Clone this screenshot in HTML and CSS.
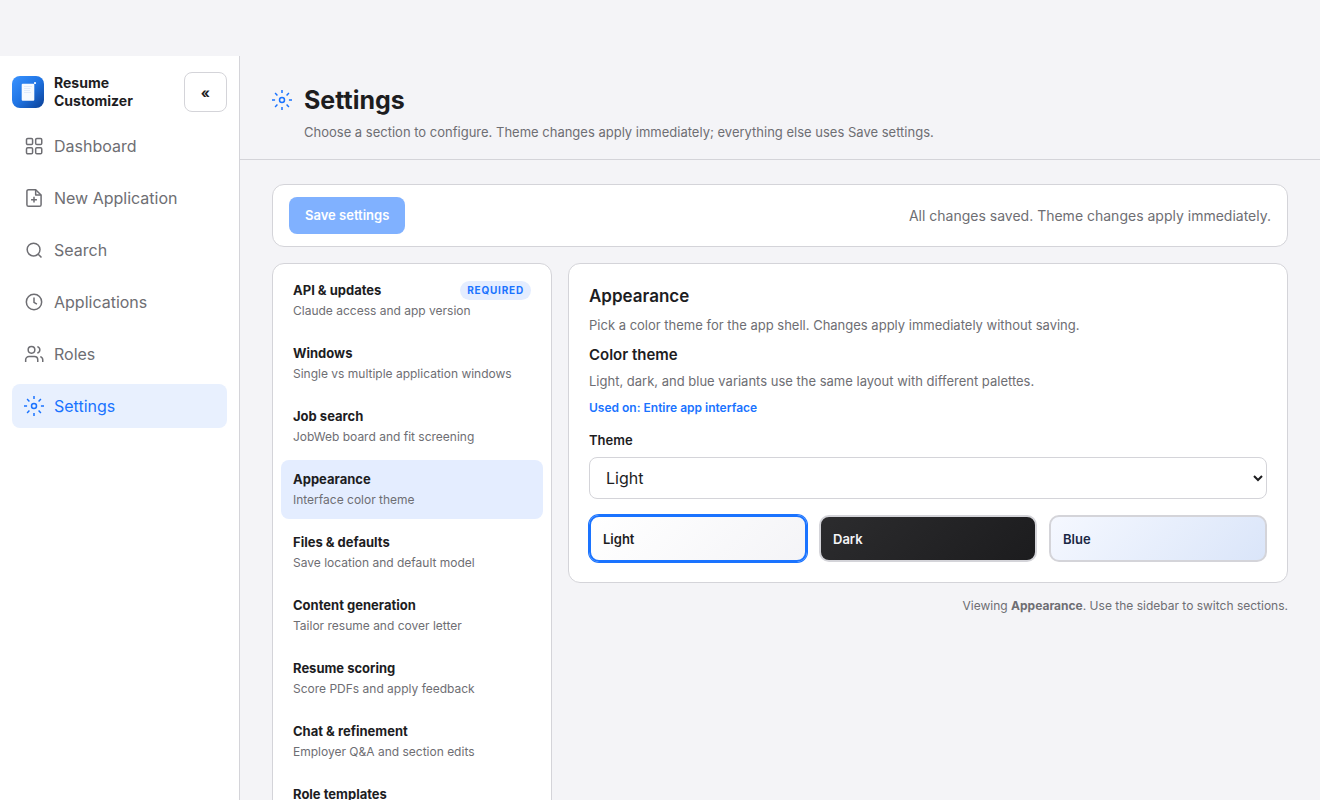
FILE: index.html
```html
<!DOCTYPE html>
<html lang="en">
<head>
    <meta charset="UTF-8">
    <meta name="viewport" content="width=device-width, initial-scale=1">
    <title>Resume Customizer</title>
    <link rel="stylesheet" href="styles.css">
</head>
<body>

<!-- Shared icon shapes -->
<svg class="icon-defs" aria-hidden="true">
    <symbol id="icon-settings" viewBox="0 0 24 24">
        <circle cx="12" cy="12" r="3"/>
        <path d="M12 0v3.700M12 20.300V24M3.700 3.700l2.800 2.800M17.500 17.500l2.800 2.800M0 12h3.700M20.300 12H24M3.700 20.300l2.800-2.800M17.500 6.500l2.800-2.800"/>
    </symbol>
</svg>

<div class="app">
    <aside class="sidebar">
        <div class="sidebar-header">
            <svg class="logo" viewBox="0 0 32 32" aria-hidden="true">
                <defs>
                    <linearGradient id="logo-bg" x1="0" y1="0" x2="1" y2="1">
                        <stop offset="0" stop-color="#3a93ff"/>
                        <stop offset="0.5" stop-color="#1f74e4"/>
                        <stop offset="1" stop-color="#0b3f94"/>
                    </linearGradient>
                </defs>
                <rect width="32" height="32" rx="8" fill="url(#logo-bg)"/>
                <rect x="9.700" y="7.700" width="12.600" height="17" rx="1" fill="#f6faff"/>
                <path d="M12 10.500h8M12 12.500h6.500M12 14.500h6M12 16.500h7" stroke="#e0ebfb" stroke-width="1"/>
                <rect x="22" y="6" width="2" height="2" rx="0.500" fill="#e4f0ff"/>
            </svg>
            <span class="brand">Resume Customizer</span>
            <button class="collapse-btn" type="button" aria-label="Collapse sidebar">«</button>
        </div>

        <nav class="nav">
            <a class="nav-link" href="#dashboard">
                <svg class="icon" viewBox="0 0 24 24"><rect x="3" y="3" width="7.300" height="7.300" rx="1.500"/><rect x="14" y="3" width="7.300" height="7.300" rx="1.500"/><rect x="3" y="14" width="7.300" height="7.300" rx="1.500"/><rect x="14" y="14" width="7.300" height="7.300" rx="1.500"/></svg>
                Dashboard
            </a>
            <a class="nav-link" href="#new">
                <svg class="icon" viewBox="0 0 24 24"><path d="M14 2H5.500a2 2 0 0 0-2 2v16a2 2 0 0 0 2 2h13a2 2 0 0 0 2-2V8.500z"/><path d="M14 2v6.500h6.500M12 10.500v7M8.500 14h7"/></svg>
                New Application
            </a>
            <a class="nav-link" href="#search">
                <svg class="icon" viewBox="0 0 24 24"><circle cx="11.500" cy="11.500" r="7.700"/><path d="M21 21l-4-4"/></svg>
                Search
            </a>
            <a class="nav-link" href="#applications">
                <svg class="icon" viewBox="0 0 24 24"><circle cx="12" cy="12" r="9.200"/><path d="M12 6.500v6l3.500 2"/></svg>
                Applications
            </a>
            <a class="nav-link" href="#roles">
                <svg class="icon" viewBox="0 0 24 24"><path d="M16.500 21.500v-2.500a4 4 0 0 0-4-4H6a4 4 0 0 0-4 4v2.500"/><circle cx="9" cy="7" r="4"/><path d="M22.500 21.500v-2.500a4 4 0 0 0-3-3.870M16 3.130a4 4 0 0 1 0 7.750"/></svg>
                Roles
            </a>
            <a class="nav-link active" href="#settings" aria-current="page">
                <svg class="icon"><use href="#icon-settings"/></svg>
                Settings
            </a>
        </nav>
    </aside>

    <main class="main">
        <header class="page-header">
            <h1><svg class="icon"><use href="#icon-settings"/></svg>Settings</h1>
            <p>Choose a section to configure. Theme changes apply immediately; everything else uses Save settings.</p>
        </header>

        <div class="content">
            <div class="save-bar">
                <button class="save-btn" type="button" disabled>Save settings</button>
                <span class="save-status">All changes saved. Theme changes apply immediately.</span>
            </div>

            <div class="settings-layout">
                <nav class="section-nav card">
                    <button class="section-btn" type="button">
                        <span class="section-title">API &amp; updates <span class="badge">Required</span></span>
                        <span class="section-desc">Claude access and app version</span>
                    </button>
                    <button class="section-btn" type="button">
                        <span class="section-title">Windows</span>
                        <span class="section-desc">Single vs multiple application windows</span>
                    </button>
                    <button class="section-btn" type="button">
                        <span class="section-title">Job search</span>
                        <span class="section-desc">JobWeb board and fit screening</span>
                    </button>
                    <button class="section-btn active" type="button">
                        <span class="section-title">Appearance</span>
                        <span class="section-desc">Interface color theme</span>
                    </button>
                    <button class="section-btn" type="button">
                        <span class="section-title">Files &amp; defaults</span>
                        <span class="section-desc">Save location and default model</span>
                    </button>
                    <button class="section-btn" type="button">
                        <span class="section-title">Content generation</span>
                        <span class="section-desc">Tailor resume and cover letter</span>
                    </button>
                    <button class="section-btn" type="button">
                        <span class="section-title">Resume scoring</span>
                        <span class="section-desc">Score PDFs and apply feedback</span>
                    </button>
                    <button class="section-btn" type="button">
                        <span class="section-title">Chat &amp; refinement</span>
                        <span class="section-desc">Employer Q&amp;A and section edits</span>
                    </button>
                    <button class="section-btn" type="button">
                        <span class="section-title">Role templates</span>
                    </button>
                </nav>

                <div class="section-main">
                    <section class="panel card">
                        <h2>Appearance</h2>
                        <p class="hint">Pick a color theme for the app shell. Changes apply immediately without saving.</p>
                        <h3>Color theme</h3>
                        <p class="hint">Light, dark, and blue variants use the same layout with different palettes.</p>
                        <p class="used-on">Used on: Entire app interface</p>

                        <label for="theme">Theme</label>
                        <select id="theme">
                            <option>Light</option>
                            <option>Dark</option>
                            <option>Blue</option>
                        </select>

                        <div class="swatches">
                            <button class="swatch swatch-light active" type="button">Light</button>
                            <button class="swatch swatch-dark" type="button">Dark</button>
                            <button class="swatch swatch-blue" type="button">Blue</button>
                        </div>
                    </section>
                    <p class="viewing">Viewing <strong>Appearance</strong>. Use the sidebar to switch sections.</p>
                </div>
            </div>
        </div>
    </main>
</div>

</body>
</html>
```
FILE: styles.css
```css
:root {
    --accent: #1a73ff;
    --accent-soft: #e4edff;
    --bg: #f4f4f7;
    --border: #d4d4d9;
    --text: #1d1d1f;
    --muted: #6e6e73;
}

* {
    box-sizing: border-box;
}

body {
    margin: 0;
    height: 100vh;
    padding-top: 56px;
    overflow: hidden;
    font-family: Inter, sans-serif;
    font-size: 16px;
    line-height: 24px;
    color: var(--text);
    background: var(--bg);
}

h1, h2, h3, p {
    margin: 0;
}

button, select {
    font-family: inherit;
    color: inherit;
    cursor: pointer;
}

.icon-defs {
    display: none;
}

.icon {
    width: 20px;
    height: 20px;
    flex-shrink: 0;
    fill: none;
    stroke: currentColor;
    stroke-width: 1.8;
    stroke-linejoin: round;
}

.app {
    display: flex;
    height: 100%;
}

/* Sidebar */
.sidebar {
    width: 240px;
    flex-shrink: 0;
    padding: 16px 12px;
    background: #fff;
    border-right: 1px solid var(--border);
}

.sidebar-header {
    display: flex;
    align-items: center;
    gap: 10px;
    margin-bottom: 12px;
}

.logo {
    width: 32px;
    height: 32px;
    flex-shrink: 0;
}

.brand {
    flex: 1;
    font-size: 14px;
    line-height: 18px;
    font-weight: 700;
}

.collapse-btn {
    height: 40px;
    padding: 0 16px;
    font-size: 14px;
    font-weight: 700;
    background: #fff;
    border: 1px solid var(--border);
    border-radius: 8px;
}

.nav {
    display: flex;
    flex-direction: column;
    gap: 8px;
}

.nav-link {
    display: flex;
    align-items: center;
    gap: 10px;
    padding: 10px 12px;
    color: var(--muted);
    text-decoration: none;
    border-radius: 8px;
}

.nav-link.active {
    color: var(--accent);
    background: #e8f0fe;
}

/* Page header */
.main {
    flex: 1;
    min-width: 0;
}

.page-header {
    padding: 24px 32px 17px;
    border-bottom: 1px solid var(--border);
}

.page-header h1 {
    display: flex;
    align-items: center;
    gap: 12px;
    font-size: 25px;
    line-height: 40px;
    font-weight: 700;
}

.page-header h1 .icon {
    color: var(--accent);
}

.page-header p {
    margin-top: 3px;
    padding-left: 32px;
    font-size: 13px;
    line-height: 19px;
    color: var(--muted);
}

.content {
    padding: 24px 32px;
}

.card,
.save-bar {
    background: #fff;
    border: 1px solid var(--border);
    border-radius: 12px;
}

.save-bar {
    display: flex;
    align-items: center;
    justify-content: space-between;
    margin-bottom: 16px;
    padding: 12px 16px;
}

.save-btn {
    padding: 9px 16px;
    font-size: 13px;
    line-height: 19px;
    font-weight: 600;
    color: #fff;
    background: var(--accent);
    border: none;
    border-radius: 8px;
}

.save-btn:disabled {
    opacity: 0.55;
    cursor: not-allowed;
}

.save-status {
    font-size: 14px;
    color: var(--muted);
}

/* Settings sections */
.settings-layout {
    display: grid;
    grid-template-columns: 280px 1fr;
    gap: 16px;
    align-items: start;
}

.section-nav {
    display: flex;
    flex-direction: column;
    gap: 4px;
    padding: 7px 8px;
}

.section-btn {
    display: flex;
    flex-direction: column;
    gap: 2px;
    padding: 10px 12px;
    text-align: left;
    background: none;
    border: none;
    border-radius: 8px;
}

.section-btn.active {
    background: var(--accent-soft);
}

.section-title {
    display: flex;
    align-items: center;
    justify-content: space-between;
    width: 100%;
    font-size: 13px;
    line-height: 19px;
    font-weight: 700;
}

.section-desc {
    font-size: 12px;
    line-height: 18px;
    color: var(--muted);
}

.badge {
    padding: 2px 7px;
    font-size: 10px;
    line-height: 15px;
    font-weight: 700;
    letter-spacing: 0.08em;
    text-transform: uppercase;
    color: var(--accent);
    background: var(--accent-soft);
    border-radius: 10px;
}

.panel {
    padding: 20px;
}

.panel h2 {
    font-size: 17px;
    line-height: 24px;
    font-weight: 600;
}

.panel h3 {
    margin-top: 8px;
    font-size: 15px;
    line-height: 24px;
    font-weight: 600;
}

.hint {
    margin-top: 8px;
    font-size: 13px;
    line-height: 19px;
    color: var(--muted);
}

h3 + .hint {
    margin-top: 5px;
}

.used-on {
    margin-top: 8px;
    font-size: 12px;
    line-height: 18px;
    font-weight: 600;
    color: var(--accent);
}

.panel label {
    display: block;
    margin: 14px 0 7px;
    font-size: 13px;
    line-height: 19px;
    font-weight: 600;
}

.panel select {
    display: block;
    width: 100%;
    height: 42px;
    padding: 0 12px;
    font-size: 16px;
    background: #fff;
    border: 1px solid var(--border);
    border-radius: 8px;
}

.swatches {
    display: grid;
    grid-template-columns: repeat(3, 1fr);
    gap: 12px;
    margin-top: 16px;
}

.swatch {
    height: 47px;
    padding: 0 12px;
    font-size: 13px;
    font-weight: 600;
    text-align: left;
    border: 2px solid var(--border);
    border-radius: 10px;
}

.swatch-light {
    background: linear-gradient(135deg, #fff, #f4f4f7);
}

.swatch-dark {
    color: #f5f5f7;
    background: linear-gradient(135deg, #2c2c2e, #1c1c1e);
}

.swatch-blue {
    color: #1a2744;
    background: linear-gradient(135deg, #f5f8ff, #dae5f9);
}

.swatch.active {
    border-color: var(--accent);
    box-shadow: 0 0 0 1px var(--accent);
}

.viewing {
    margin-top: 14px;
    font-size: 12px;
    line-height: 18px;
    text-align: right;
    color: var(--muted);
}
```
